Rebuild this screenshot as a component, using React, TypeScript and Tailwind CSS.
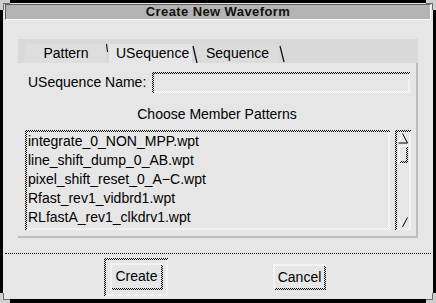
import type { ReactNode } from 'react'

const dark = 'bg-[image:repeating-conic-gradient(#000_0%_25%,#e6e6e6_0%_50%)] bg-[length:2px_2px]'
const light = 'bg-[image:repeating-conic-gradient(#fff_0%_25%,#e6e6e6_0%_50%)] bg-[length:2px_2px]'

function Sunken({ className = '', inner = '', children }: { className?: string; inner?: string; children?: ReactNode }) {
  return (
    <div className={`${dark} pl-[2px] pt-[2px] ${className}`}>
      <div className={`${light} h-full pb-[2px] pr-[2px]`}>
        <div className={`h-full bg-[#e6e6e6] ${inner}`}>{children}</div>
      </div>
    </div>
  )
}

function Raised({ className = '', inner = '', children }: { className?: string; inner?: string; children?: ReactNode }) {
  return (
    <div className={`${light} pl-[2px] pt-[2px] ${className}`}>
      <div className={`${dark} h-full pb-[2px] pr-[2px]`}>
        <div className={`h-full bg-[#e6e6e6] ${inner}`}>{children}</div>
      </div>
    </div>
  )
}

function Corner({ pos, flipX, flipY }: { pos: string; flipX?: boolean; flipY?: boolean }) {
  return (
    <svg
      width="10"
      height="10"
      viewBox="0 0 10 10"
      className={`absolute ${pos}`}
      style={{ transform: `scale(${flipX ? -1 : 1}, ${flipY ? -1 : 1})` }}
    >
      <path d="M0 0H10V3H3V10H0Z" fill="#cfcfcf" />
      <path d="M3 3H10V4H4V10H3Z" fill="#6a6a6a" />
    </svg>
  )
}

const files = [
  'integrate_0_NON_MPP.wpt',
  'line_shift_dump_0_AB.wpt',
  'pixel_shift_reset_0_A\u2212C.wpt',
  'Rfast_rev1_vidbrd1.wpt',
  'RLfastA_rev1_clkdrv1.wpt',
]

export default function App() {
  return (
    <div className="relative h-[303px] w-[436px] overflow-hidden bg-black px-[3px] pb-[4px] pt-[3px] font-['Liberation_Sans',Arial,Helvetica,sans-serif] text-[14px] text-black">
      <div className="flex h-full flex-col bg-[#e6e6e6]">
        <div className="mx-[2px] mt-[1px] flex h-[16px] items-center justify-center border border-[#5c5c5c] border-b-white border-r-white bg-[#b4b4b4] text-[13px] font-bold tracking-[0.4px] text-[#111]">
          Create New Waveform
        </div>

        {/* tab strip */}
        <div className="mx-[15px] mt-[19px] flex h-[24px] items-end bg-[#d9d9d9] pl-[5px]">
          <div className="flex h-[19px] w-[83px] items-center justify-center bg-[#dedede] pl-[3px] [clip-path:polygon(0_100%,4px_0,100%_0,100%_100%)]">
            Pattern
          </div>
          <svg width="3" height="19" className="shrink-0">
            <line x1="0.5" y1="0" x2="1.5" y2="8" stroke="#000" strokeWidth="1" />
          </svg>
          <div className="flex h-[19px] w-[83px] items-center bg-[#e6e6e6] pl-[7px]">USequence</div>
          <svg width="6" height="19" className="shrink-0">
            <line x1="1" y1="2" x2="5" y2="19" stroke="#000" strokeWidth="1.2" />
          </svg>
          <div className="flex h-[19px] w-[81px] items-center bg-[#dcdcdc] pl-[8px]">Sequence</div>
          <svg width="6" height="19" className="shrink-0">
            <line x1="1" y1="2" x2="5" y2="18" stroke="#000" strokeWidth="1.2" />
          </svg>
        </div>

        {/* panel */}
        <div className="mx-[15px] h-[175px] border-b-2 border-r-2 border-[#bdbdbd] bg-[#e6e6e6] pt-[9px]">
          <div className="ml-[10px] flex h-[21px] items-center">
            <span className="w-[124px]">USequence Name:</span>
            <Sunken className="h-[21px] w-[258px]" />
          </div>
          <div className="mt-[12px] h-[19px] text-center leading-[19px]">Choose Member Patterns</div>
          <div className="ml-[7px] mt-[6px] flex h-[100px]">
            <Sunken className="h-[100px] w-[365px]" inner="pl-[1px] overflow-hidden">
              {files.map((f) => (
                <div key={f} className="h-[19px] whitespace-nowrap leading-[19px]">
                  {f}
                </div>
              ))}
            </Sunken>
            <Sunken className="ml-[5px] h-[100px] w-[16px]" inner="flex flex-col">
              <svg width="12" height="12" className="shrink-0">
                <path d="M1.5 11L5.5 1.5" stroke="#fff" strokeWidth="1" fill="none" />
                <path d="M5.5 1.5L10.5 11H1.5" stroke="#000" strokeWidth="1" fill="none" />
              </svg>
              <Raised className="mx-[1px] mt-[1px] h-[18px] w-[10px]" />
              <div className="flex-1" />
              <svg width="12" height="12" className="shrink-0">
                <path d="M1.5 1.5L5.5 11" stroke="#fff" strokeWidth="1" fill="none" />
                <path d="M10.5 1.5L5.5 11" stroke="#000" strokeWidth="1" fill="none" />
              </svg>
            </Sunken>
          </div>
        </div>

        <div className="mx-[2px] mt-[15px] h-0 border-t border-dotted border-black" />

        <div className="mt-[4px] flex h-[38px] items-center pl-[101px]">
          <Sunken className="h-[38px] w-[64px]" inner="pl-[4px] pt-[3px]">
            <Raised className="h-[27px] w-[53px]" inner="flex items-center justify-center">
              Create
            </Raised>
          </Sunken>
          <Raised className="ml-[105px] h-[26px] w-[53px]" inner="flex items-center justify-center">
            Cancel
          </Raised>
        </div>
      </div>

      <Corner pos="left-0 top-0" />
      <Corner pos="right-0 top-0" flipX />
      <Corner pos="left-0 bottom-0" flipY />
      <Corner pos="right-0 bottom-0" flipX flipY />
    </div>
  )
}
